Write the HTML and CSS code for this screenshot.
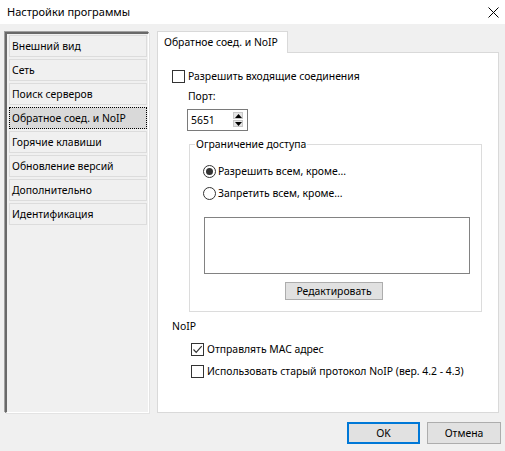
FILE: index.html
```html
<!DOCTYPE html>
<html lang="ru">
<head>
<meta charset="utf-8">
<title>Настройки программы</title>
<link rel="stylesheet" href="styles.css">
</head>
<body>
<div class="window">
  <div class="titlebar">
    <span class="title">Настройки программы</span>
    <svg class="close" width="11" height="11" viewBox="0 0 11 11"><path d="M0.5 0.5 L10.5 10.5 M10.5 0.5 L0.5 10.5" stroke="#000" stroke-width="1" fill="none"/></svg>
  </div>
  <div class="content">
    <ul class="nav">
      <li class="nav-item">Внешний вид</li>
      <li class="nav-item">Сеть</li>
      <li class="nav-item">Поиск серверов</li>
      <li class="nav-item selected">Обратное соед. и NoIP</li>
      <li class="nav-item">Горячие клавиши</li>
      <li class="nav-item">Обновление версий</li>
      <li class="nav-item">Дополнительно</li>
      <li class="nav-item">Идентификация</li>
    </ul>
    <div class="tabs">
      <div class="tabstrip"><div class="tab">Обратное соед. и NoIP</div></div>
      <div class="page">
        <label class="row check-row"><span class="checkbox"></span><span>Разрешить входящие соединения</span></label>
        <div class="row port-label">Порт:</div>
        <div class="spinbox">
          <span class="spin-value">5651</span>
          <span class="spinner">
            <span class="spin-btn"><svg width="7" height="4" viewBox="0 0 7 4"><path d="M3.5 0 L7 4 L0 4 Z" fill="#000"/></svg></span>
            <span class="spin-btn"><svg width="7" height="4" viewBox="0 0 7 4"><path d="M0 0 L7 0 L3.5 4 Z" fill="#000"/></svg></span>
          </span>
        </div>
        <fieldset class="group">
          <legend class="legend">Ограничение доступа</legend>
          <div class="group-body">
            <label class="row radio-row"><span class="radio checked"></span><span>Разрешить всем, кроме...</span></label>
            <label class="row radio-row second"><span class="radio"></span><span>Запретить всем, кроме...</span></label>
            <div class="listbox"></div>
            <button class="btn edit">Редактировать</button>
          </div>
        </fieldset>
        <div class="row noip-label">NoIP</div>
        <label class="row check-row sub first"><span class="checkbox checked"><svg width="11" height="11" viewBox="0 0 11 11"><path d="M1.5 5.5 L4.2 8.3 L9.7 2.2" stroke="#333" stroke-width="1.2" fill="none"/></svg></span><span>Отправлять MAC адрес</span></label>
        <label class="row check-row sub second"><span class="checkbox"></span><span>Использовать старый протокол NoIP (вер. 4.2 - 4.3)</span></label>
      </div>
    </div>
  </div>
  <div class="buttons">
    <button class="btn dialog default">OK</button>
    <button class="btn dialog">Отмена</button>
  </div>
</div>
</body>
</html>
```
FILE: styles.css
```css
* { box-sizing: border-box; }
html, body { margin: 0; padding: 0; }
body {
  width: 505px;
  height: 451px;
  overflow: hidden;
  background: #f0f0f0;
  font-family: "Noto Sans", "Liberation Sans", sans-serif;
  font-size: 10.4px;
  color: #000;
}
.window { width: 505px; height: 451px; display: flex; flex-direction: column; }
.titlebar {
  height: 24px;
  background: #fff;
  display: flex;
  align-items: center;
  justify-content: space-between;
  padding: 0 6px 1px 7px;
}
.title { font-size: 11px; line-height: 16px; }
.close { display: block; margin-top: 1px; margin-right: 0; }

.content {
  display: flex;
  align-items: flex-start;
  padding: 7px 0 0 5px;
  height: 389px;
}
.nav {
  list-style: none;
  margin: 1px 0 0 0;
  padding: 1px 1px 0 2px;
  width: 144px;
  height: 381px;
  border-style: solid;
  border-width: 2px 1px 1px 2px;
  border-color: #696969 #fff #fff #696969;
  box-shadow: -1px -1px 0 0 #a0a0a0, 1px 1px 0 0 #e3e3e3;
  background: #f0f0f0;
  display: flex;
  flex-direction: column;
  gap: 2px;
}
.nav-item {
  height: 22px;
  line-height: 20px;
  border: 1px solid #dcdcdc;
  padding-left: 2px;
  white-space: nowrap;
}
.nav-item.selected {
  background: #d9d9d9;
  border: 1px dotted #000;
}
.tabs {
  margin-left: 8px;
  width: 342px;
  display: flex;
  flex-direction: column;
}
.tabstrip { display: flex; height: 21px; }
.tab {
  position: relative;
  z-index: 1;
  height: 22px;
  background: #fff;
  border: 1px solid #d9d9d9;
  border-bottom: none;
  padding: 0 6px;
  line-height: 20px;
  width: 131px;
  white-space: nowrap;
}
.page {
  height: 361px;
  background: #fff;
  border: 1px solid #d9d9d9;
  padding: 15px 14px 0 14px;
  display: flex;
  flex-direction: column;
  align-items: flex-start;
}
.row {
  display: flex;
  align-items: center;
  height: 17px;
  line-height: 17px;
  white-space: nowrap;
}
.checkbox {
  width: 13px;
  height: 13px;
  border: 1px solid #333;
  background: #fff;
  margin-right: 3px;
  display: flex;
  align-items: center;
  justify-content: center;
  flex: none;
}
.checkbox svg { display: block; }
.port-label { margin: 3px 0 0 16px; }
.spinbox {
  margin: 4px 0 0 15px;
  width: 61px;
  height: 22px;
  border: 1px solid #7a7a7a;
  display: flex;
  align-items: flex-start;
  justify-content: space-between;
  padding: 0 4px 0 3px;
}
.spin-value { line-height: 20px; }
.spinner {
  margin-top: 2px;
  display: flex;
  flex-direction: column;
  gap: 1px;
}
.spin-btn {
  width: 10px;
  height: 7px;
  background: #e5e5e5;
  border: 1px solid #c8c8c8;
  display: flex;
  align-items: center;
  justify-content: center;
}
.spin-btn svg { display: block; }

.group {
  margin: 5px 0 0 17px;
  width: 293px;
  padding: 0 0 11px 0;
  border: 1px solid #dcdcdc;
  min-inline-size: 0;
}
.legend {
  padding: 0 1px;
  margin-left: 5px;
  line-height: 17px;
  height: 17px;
}
.group-body {
  padding: 10px 0 0 13px;
  display: flex;
  flex-direction: column;
  align-items: flex-start;
}
.radio {
  width: 13px;
  height: 13px;
  border: 1px solid #333;
  border-radius: 50%;
  background: #fff;
  margin-right: 2px;
  display: flex;
  align-items: center;
  justify-content: center;
  flex: none;
}
.radio.checked::after {
  content: "";
  width: 7px;
  height: 7px;
  border-radius: 50%;
  background: #333;
}
.radio-row.second { margin-top: 5px; }
.listbox {
  margin: 15px 0 0 1px;
  width: 266px;
  height: 57px;
  border: 1px solid #828282;
  background: #fff;
}
.btn {
  font-family: inherit;
  font-size: 10.4px;
  color: #000;
  background: #e1e1e1;
  border: 1px solid #adadad;
  padding: 0;
  margin: 0;
}
.edit {
  margin: 8px 0 0 82px;
  width: 98px;
  height: 18px;
  line-height: 16px;
}
.noip-label { margin: 6px 0 0 0; }
.check-row.sub { margin-left: 19px; }
.check-row.sub.first { margin-top: 6px; }
.check-row.sub.second { margin-top: 5px; }

.buttons {
  display: flex;
  justify-content: flex-end;
  gap: 7px;
  padding: 9px 4px 0 0;
}
.dialog {
  width: 73px;
  height: 22px;
}
.dialog + .dialog { width: 74px; }
.default { border: 2px solid #0078d7; }
```
